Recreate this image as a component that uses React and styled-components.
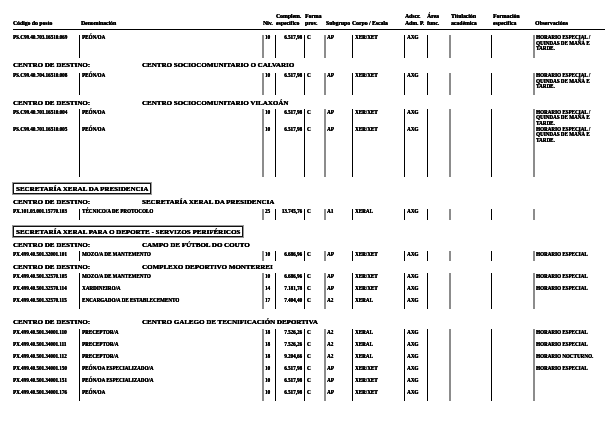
import React from 'react';
import styled, { createGlobalStyle } from 'styled-components';

const GlobalStyle = createGlobalStyle`
  html, body {
    margin: 0;
    padding: 0;
    background: #fff;
  }
  body {
    font-family: "Liberation Serif", "Times New Roman", serif;
    color: #000;
  }
`;

// column widths, taken from the ruled lines of the listing
const cols = '66px 183px 13px 29px 20px 28px 52px 23px 22px 42px 42px 72px';
// left rule of each column: k = black hairline, g = grey double
const rules = ['', 'k', 'g', 'k', 'k', 'g', 'k', 'k', 'k', 'g', 'k', 'g'];

const Page = styled.div`
  width: 615px;
  height: 439px;
  overflow: hidden;
  box-sizing: border-box;
  padding: 13px 10px 0 13px;
  /* own layer without background: grey antialiasing, no colour fringes */
  will-change: transform;
  /* the scan prints heavier than the bold face */
  text-shadow: 0.3px 0 0 #000, 0 0.2px 0 #000;
`;

const Header = styled.div`
  display: grid;
  grid-template-columns: ${cols};
  align-items: end;
  border-bottom: 1px solid #000;
  padding-bottom: 1.5px;
  font-size: 5.7px;
  font-weight: bold;
  line-height: 7px;
`;

const HeadCell = styled.div`
  padding-left: ${(p) => p.pad ?? 0}px;
  white-space: nowrap;
`;

const Row = styled.div`
  display: grid;
  grid-template-columns: ${cols};
  height: ${(p) => p.h}px;
  margin-top: ${(p) => p.mt || 0}px;
  font-size: 5.1px;
  font-weight: bold;
  line-height: 5.5px;
`;

const Cell = styled.div`
  padding: 0.5px ${(p) => (p.right ? 2 : 0)}px 0 ${(p) => (p.rule === 'g' ? 1 : 2)}px;
  text-align: ${(p) => (p.right ? 'right' : 'left')};
  white-space: nowrap;
  border-left: ${(p) => {
    if (p.rule === 'k') return '1px solid #000';
    if (p.rule === 'g') return '2px solid #8c8c8c';
    return 'none';
  }};
  &:first-child {
    padding-left: 0;
  }
`;

const Destino = styled.div`
  display: grid;
  grid-template-columns: 129px 1fr;
  margin-top: ${(p) => p.mt}px;
  font-size: 7px;
  font-weight: bold;
  line-height: 8px;
  white-space: nowrap;
`;

const Unit = styled.div`
  display: inline-block;
  margin-top: ${(p) => p.mt}px;
  border: 1px solid #111;
  box-shadow: 0 0 0 1px #999;
  padding: 1px 2px 0 2px;
  font-size: 7px;
  font-weight: bold;
  line-height: 8px;
  white-space: nowrap;
`;

const ESP = ['HORARIO ESPECIAL /', 'QUINDAS DE MAÑÁ E', 'TARDE.'];

function Posto({ d, h, mt }) {
  const values = [d.code, d.name, d.niv, d.comp, 'C', d.sub, d.corpo, 'AXG', '', '', '', ''];
  return (
    <Row h={h} mt={mt}>
      {values.map((v, i) => (
        <Cell key={i} rule={rules[i]} right={i === 3}>
          {i === 11 && d.obs ? d.obs.map((l) => <div key={l}>{l}</div>) : v}
        </Cell>
      ))}
    </Row>
  );
}

const peon = (code) => ({
  code, name: 'PEÓN/OA', niv: '10', comp: '6.517,98', sub: 'AP', corpo: 'XER/XET', obs: ESP,
});

export default function App() {
  return (
    <>
      <GlobalStyle />
      <Page>
        <Header>
          <HeadCell>Código do posto</HeadCell>
          <HeadCell pad={2}>Denominación</HeadCell>
          <HeadCell pad={1}>Niv.</HeadCell>
          <HeadCell pad={1}>Complem.<br />específico</HeadCell>
          <HeadCell pad={1}>Forma<br />prov.</HeadCell>
          <HeadCell pad={2}>Subgrupo</HeadCell>
          <HeadCell>Corpo / Escala</HeadCell>
          <HeadCell pad={1}>Adscr.<br />Adm. P.</HeadCell>
          <HeadCell>Área<br />func.</HeadCell>
          <HeadCell pad={2}>Titulación<br />académica</HeadCell>
          <HeadCell pad={2}>Formación<br />específica</HeadCell>
          <HeadCell pad={2}>Observacións</HeadCell>
        </Header>

        <Posto d={peon('PS.C99.40.703.16510.069')} h={23} mt={5} />

        <Destino mt={3}>
          <span>CENTRO DE DESTINO:</span>
          <span>CENTRO SOCIOCOMUNITARIO O CALVARIO</span>
        </Destino>
        <Posto d={peon('PS.C99.40.704.16510.008')} h={22} mt={4} />

        <Destino mt={4}>
          <span>CENTRO DE DESTINO:</span>
          <span>CENTRO SOCIOCOMUNITARIO VILAXOÁN</span>
        </Destino>
        <Posto d={peon('PS.C99.40.701.16510.004')} h={17} mt={2.5} />
        <Posto d={peon('PS.C99.40.701.16510.005')} h={50.5} />

        <Unit mt={5}>SECRETARÍA XERAL DA PRESIDENCIA</Unit>
        <Destino mt={3}>
          <span>CENTRO DE DESTINO:</span>
          <span>SECRETARÍA XERAL DA PRESIDENCIA</span>
        </Destino>
        <Posto
          d={{ code: 'PX.101.03.001.15770.103', name: 'TÉCNICO/A DE PROTOCOLO', niv: '25', comp: '13.745,76', sub: 'A1', corpo: 'XERAL' }}
          h={11}
          mt={3}
        />

        <Unit mt={5}>SECRETARÍA XERAL PARA O DEPORTE - SERVIZOS PERIFÉRICOS</Unit>
        <Destino mt={3}>
          <span>CENTRO DE DESTINO:</span>
          <span>CAMPO DE FÚTBOL DO COUTO</span>
        </Destino>
        <Posto
          d={{ code: 'PX.499.40.501.32001.101', name: 'MOZO/A DE MANTEMENTO', niv: '10', comp: '6.686,96', sub: 'AP', corpo: 'XER/XET', obs: ['HORARIO ESPECIAL'] }}
          h={10}
          mt={2.5}
        />

        <Destino mt={2}>
          <span>CENTRO DE DESTINO:</span>
          <span>COMPLEXO DEPORTIVO MONTERREI</span>
        </Destino>
        <Posto
          d={{ code: 'PX.499.40.501.32570.105', name: 'MOZO/A DE MANTEMENTO', niv: '10', comp: '6.686,96', sub: 'AP', corpo: 'XER/XET', obs: ['HORARIO ESPECIAL'] }}
          h={12}
          mt={2}
        />
        <Posto
          d={{ code: 'PX.499.40.501.32570.114', name: 'XARDINEIRO/A', niv: '14', comp: '7.181,78', sub: 'AP', corpo: 'XER/XET', obs: ['HORARIO ESPECIAL'] }}
          h={12}
        />
        <Posto
          d={{ code: 'PX.499.40.501.32570.115', name: 'ENCARGADO/A DE ESTABLECEMENTO', niv: '17', comp: '7.404,40', sub: 'A2', corpo: 'XERAL' }}
          h={12}
        />

        <Destino mt={9}>
          <span>CENTRO DE DESTINO:</span>
          <span>CENTRO GALEGO DE TECNIFICACIÓN DEPORTIVA</span>
        </Destino>
        <Posto
          d={{ code: 'PX.499.40.501.34001.110', name: 'PRECEPTOR/A', niv: '18', comp: '7.526,26', sub: 'A2', corpo: 'XERAL', obs: ['HORARIO ESPECIAL'] }}
          h={12}
          mt={3}
        />
        <Posto
          d={{ code: 'PX.499.40.501.34001.111', name: 'PRECEPTOR/A', niv: '18', comp: '7.526,26', sub: 'A2', corpo: 'XERAL', obs: ['HORARIO ESPECIAL'] }}
          h={12}
        />
        <Posto
          d={{ code: 'PX.499.40.501.34001.112', name: 'PRECEPTOR/A', niv: '18', comp: '9.204,66', sub: 'A2', corpo: 'XERAL', obs: ['HORARIO NOCTURNO.'] }}
          h={12}
        />
        <Posto
          d={{ code: 'PX.499.40.501.34001.150', name: 'PEÓN/OA ESPECIALIZADO/A', niv: '10', comp: '6.517,98', sub: 'AP', corpo: 'XER/XET', obs: ['HORARIO ESPECIAL'] }}
          h={12}
        />
        <Posto
          d={{ code: 'PX.499.40.501.34001.151', name: 'PEÓN/OA ESPECIALIZADO/A', niv: '10', comp: '6.517,98', sub: 'AP', corpo: 'XER/XET' }}
          h={12}
        />
        <Posto
          d={{ code: 'PX.499.40.501.34001.176', name: 'PEÓN/OA', niv: '10', comp: '6.517,98', sub: 'AP', corpo: 'XER/XET' }}
          h={12}
        />
      </Page>
    </>
  );
}
